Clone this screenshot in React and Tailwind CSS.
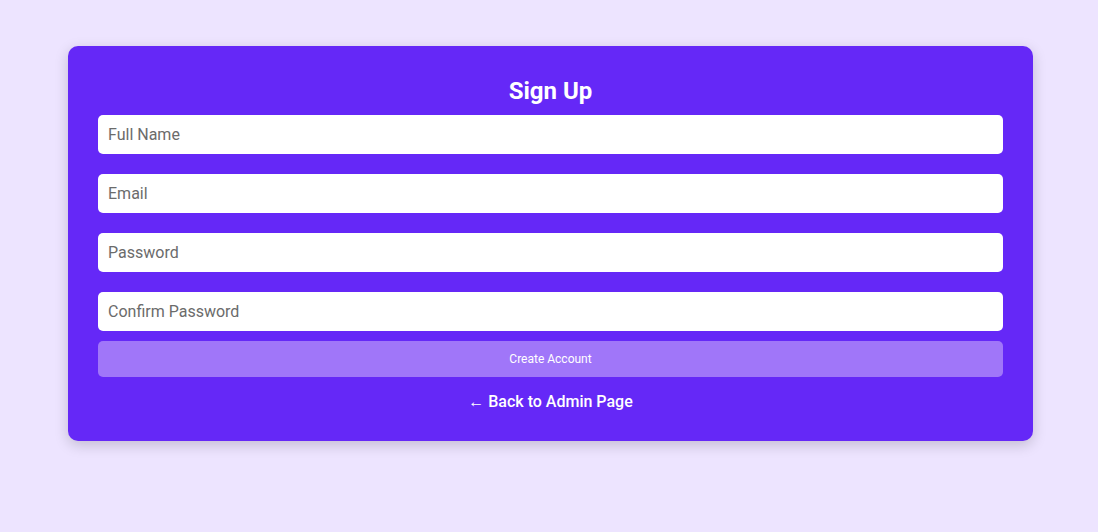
import React, { useState } from "react";

const fields = [
  { name: "fullName", type: "text", placeholder: "Full Name" },
  { name: "email", type: "email", placeholder: "Email" },
  { name: "password", type: "password", placeholder: "Password" },
  { name: "confirmPassword", type: "password", placeholder: "Confirm Password" },
];

const App = () => {
  const [form, setForm] = useState({
    fullName: "",
    email: "",
    password: "",
    confirmPassword: "",
  });

  const handleChange = (e) => {
    setForm({ ...form, [e.target.name]: e.target.value });
  };

  return (
    <div className="min-h-[532px] bg-[#EDE4FF] pt-[46px] font-['Roboto',sans-serif]">
      <div className="ml-[68px] w-[965px] rounded-[10px] bg-[#6528F7] px-[30px] pt-[29px] pb-[27px] shadow-[0_4px_14px_rgba(0,0,0,0.18)]">
        <h2 className="mb-[8px] h-[32px] text-center text-[24px] font-bold leading-[32px] text-white">
          Sign Up
        </h2>
        <form onSubmit={(e) => e.preventDefault()}>
          {fields.map((field, index) => (
            <input
              key={field.name}
              name={field.name}
              type={field.type}
              placeholder={field.placeholder}
              value={form[field.name]}
              onChange={handleChange}
              className={`block h-[39px] w-full rounded-[5px] bg-white px-[10px] text-[16px] text-[#333] outline-none placeholder:text-[#6b6b6b] ${
                index < fields.length - 1 ? "mb-[20px]" : "mb-[10px]"
              }`}
            />
          ))}
          <button
            type="submit"
            className="block h-[36px] w-full rounded-[5px] bg-[#A076F9] text-[12px] text-white"
          >
            Create Account
          </button>
        </form>
        <div className="mt-[13px] text-center">
          <a href="#" className="text-[16px] font-medium leading-[20px] text-white">
            ← Back to Admin Page
          </a>
        </div>
      </div>
    </div>
  );
};

export default App;
